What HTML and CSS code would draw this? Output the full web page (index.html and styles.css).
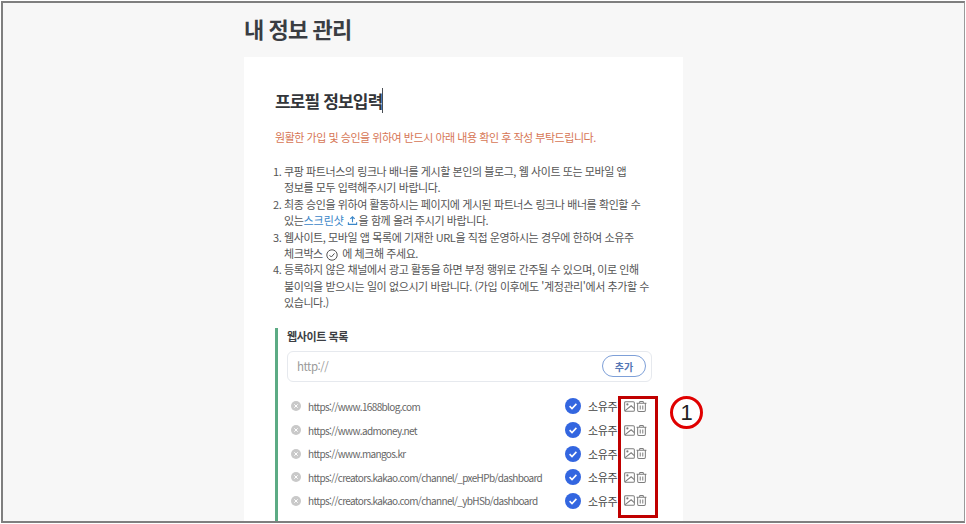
FILE: index.html
```html
<!DOCTYPE html>
<html lang="ko">
<head>
<meta charset="utf-8">
<title>내 정보 관리</title>
<link rel="stylesheet" href="styles.css">
</head>
<body>
<div class="frame">
  <main class="page">
    <h1 class="page-title">내 정보 관리</h1>
    <section class="card">
      <h2 class="card-title"><span class="caret">프로필 정보입력</span></h2>
      <p class="notice">원활한 가입 및 승인을 위하여 반드시 아래 내용 확인 후 작성 부탁드립니다.</p>
      <ol class="rules">
        <li>쿠팡 파트너스의 링크나 배너를 게시할 본인의 블로그, 웹 사이트 또는 모바일 앱<br>정보를 모두 입력해주시기 바랍니다.</li>
        <li>최종 승인을 위하여 활동하시는 페이지에 게시된 파트너스 링크나 배너를 확인할 수<br>있는<span class="link">스크린샷</span> <svg class="ico-up" viewBox="0 0 12 12"><path d="M6 8V2M3.6 4.3 6 1.9l2.4 2.4M1.5 8v2.2h9V8"/></svg><span>을 함께 올려 주시기 바랍니다.</span></li>
        <li>웹사이트, 모바일 앱 목록에 기재한 URL을 직접 운영하시는 경우에 한하여 소유주<br>체크박스 <svg class="ico-check" viewBox="0 0 12 12"><circle cx="6" cy="6" r="5.2"/><path d="M3.5 6.2 5.3 8l3.2-3.6"/></svg> <span>에 체크해 주세요.</span></li>
        <li>등록하지 않은 채널에서 광고 활동을 하면 부정 행위로 간주될 수 있으며, 이로 인해<br>불이익을 받으시는 일이 없으시기 바랍니다. (가입 이후에도 '계정관리'에서 추가할 수<br>있습니다.)</li>
      </ol>
      <div class="sites">
        <h3 class="sites-title">웹사이트 목록</h3>
        <div class="url-input">
          <span class="placeholder">http://</span>
          <button class="add-btn" type="button">추가</button>
        </div>
        <ul class="site-list">
          <li class="site">
            <svg class="ico-remove" viewBox="0 0 10 10"><circle cx="5" cy="5" r="5"/><path d="M3.3 3.3l3.4 3.4M6.7 3.3 3.3 6.7"/></svg>
            <span class="url">https://www.1688blog.com</span>
            <svg class="ico-owner" viewBox="0 0 16 16"><circle cx="8" cy="8" r="8"/><path d="M4.6 8.2 7 10.5l4.4-4.6"/></svg>
            <span class="owner">소유주</span>
            <svg class="ico-img" viewBox="0 0 12 12"><rect x=".7" y=".7" width="10.6" height="10.6" rx="1.2"/><path d="M.9 10.8 7.8 5.2l3.4 3"/><circle class="dot" cx="3.7" cy="3.7" r="1.2"/></svg>
            <svg class="ico-trash" viewBox="0 0 12 12"><path d="M.6 2.5h10.8M4 2.3V1.2q0-.6.6-.6h2.8q.6 0 .6.6v1.1M1.8 2.7v7.5q0 1.2 1.2 1.2h6q1.2 0 1.2-1.2V2.7M4.6 4.8v4.4M7.4 4.8v4.4"/></svg>
          </li>
          <li class="site">
            <svg class="ico-remove" viewBox="0 0 10 10"><circle cx="5" cy="5" r="5"/><path d="M3.3 3.3l3.4 3.4M6.7 3.3 3.3 6.7"/></svg>
            <span class="url">https://www.admoney.net</span>
            <svg class="ico-owner" viewBox="0 0 16 16"><circle cx="8" cy="8" r="8"/><path d="M4.6 8.2 7 10.5l4.4-4.6"/></svg>
            <span class="owner">소유주</span>
            <svg class="ico-img" viewBox="0 0 12 12"><rect x=".7" y=".7" width="10.6" height="10.6" rx="1.2"/><path d="M.9 10.8 7.8 5.2l3.4 3"/><circle class="dot" cx="3.7" cy="3.7" r="1.2"/></svg>
            <svg class="ico-trash" viewBox="0 0 12 12"><path d="M.6 2.5h10.8M4 2.3V1.2q0-.6.6-.6h2.8q.6 0 .6.6v1.1M1.8 2.7v7.5q0 1.2 1.2 1.2h6q1.2 0 1.2-1.2V2.7M4.6 4.8v4.4M7.4 4.8v4.4"/></svg>
          </li>
          <li class="site">
            <svg class="ico-remove" viewBox="0 0 10 10"><circle cx="5" cy="5" r="5"/><path d="M3.3 3.3l3.4 3.4M6.7 3.3 3.3 6.7"/></svg>
            <span class="url">https://www.mangos.kr</span>
            <svg class="ico-owner" viewBox="0 0 16 16"><circle cx="8" cy="8" r="8"/><path d="M4.6 8.2 7 10.5l4.4-4.6"/></svg>
            <span class="owner">소유주</span>
            <svg class="ico-img" viewBox="0 0 12 12"><rect x=".7" y=".7" width="10.6" height="10.6" rx="1.2"/><path d="M.9 10.8 7.8 5.2l3.4 3"/><circle class="dot" cx="3.7" cy="3.7" r="1.2"/></svg>
            <svg class="ico-trash" viewBox="0 0 12 12"><path d="M.6 2.5h10.8M4 2.3V1.2q0-.6.6-.6h2.8q.6 0 .6.6v1.1M1.8 2.7v7.5q0 1.2 1.2 1.2h6q1.2 0 1.2-1.2V2.7M4.6 4.8v4.4M7.4 4.8v4.4"/></svg>
          </li>
          <li class="site">
            <svg class="ico-remove" viewBox="0 0 10 10"><circle cx="5" cy="5" r="5"/><path d="M3.3 3.3l3.4 3.4M6.7 3.3 3.3 6.7"/></svg>
            <span class="url">https://creators.kakao.com/channel/_pxeHPb/dashboard</span>
            <svg class="ico-owner" viewBox="0 0 16 16"><circle cx="8" cy="8" r="8"/><path d="M4.6 8.2 7 10.5l4.4-4.6"/></svg>
            <span class="owner">소유주</span>
            <svg class="ico-img" viewBox="0 0 12 12"><rect x=".7" y=".7" width="10.6" height="10.6" rx="1.2"/><path d="M.9 10.8 7.8 5.2l3.4 3"/><circle class="dot" cx="3.7" cy="3.7" r="1.2"/></svg>
            <svg class="ico-trash" viewBox="0 0 12 12"><path d="M.6 2.5h10.8M4 2.3V1.2q0-.6.6-.6h2.8q.6 0 .6.6v1.1M1.8 2.7v7.5q0 1.2 1.2 1.2h6q1.2 0 1.2-1.2V2.7M4.6 4.8v4.4M7.4 4.8v4.4"/></svg>
          </li>
          <li class="site">
            <svg class="ico-remove" viewBox="0 0 10 10"><circle cx="5" cy="5" r="5"/><path d="M3.3 3.3l3.4 3.4M6.7 3.3 3.3 6.7"/></svg>
            <span class="url">https://creators.kakao.com/channel/_ybHSb/dashboard</span>
            <svg class="ico-owner" viewBox="0 0 16 16"><circle cx="8" cy="8" r="8"/><path d="M4.6 8.2 7 10.5l4.4-4.6"/></svg>
            <span class="owner">소유주</span>
            <svg class="ico-img" viewBox="0 0 12 12"><rect x=".7" y=".7" width="10.6" height="10.6" rx="1.2"/><path d="M.9 10.8 7.8 5.2l3.4 3"/><circle class="dot" cx="3.7" cy="3.7" r="1.2"/></svg>
            <svg class="ico-trash" viewBox="0 0 12 12"><path d="M.6 2.5h10.8M4 2.3V1.2q0-.6.6-.6h2.8q.6 0 .6.6v1.1M1.8 2.7v7.5q0 1.2 1.2 1.2h6q1.2 0 1.2-1.2V2.7M4.6 4.8v4.4M7.4 4.8v4.4"/></svg>
          </li>
        </ul>
      </div>
    </section>
  </main>
  <div class="mark-box"></div>
  <div class="mark-num">1</div>
</div>
</body>
</html>
```
FILE: styles.css
```css
* { box-sizing: border-box; }
html, body { margin: 0; padding: 0; height: 524px; overflow: hidden; background: #fff; }
body { font-family: "Noto Sans CJK KR", "Noto Sans", sans-serif; color: #555; }

.frame {
  position: relative;
  width: 964px;
  height: 522px;
  margin: 1px 0 0 1px;
  border-top: 2px solid #7f7f7f;
  border-left: 2px solid #7f7f7f;
  border-right: 1px solid #9a9a9a;
  border-bottom: 2px solid #7f7f7f;
  background: #f7f7f7;
  overflow: hidden;
}

.page { width: 439px; margin-left: 241px; }

.page-title {
  margin: 0;
  height: 54px;
  padding-top: 7px;
  font-size: 22px;
  line-height: 36px;
  font-weight: 700;
  color: #3a3d42;
  letter-spacing: -0.9px;
}

.card { background: #fff; height: 520px; padding: 31px 31px 0 31px; }

.card-title { margin: 0; font-size: 17px; line-height: 26px; font-weight: 700; color: #33363a; letter-spacing: -0.85px; }
.caret { border-right: 1px solid #4a4f55; }

.notice { margin: 14px 0 0; font-size: 11px; line-height: 18px; color: #d67655; letter-spacing: -0.47px; }

.rules {
  margin: 17px 0 0;
  padding: 0 0 0 9px;
  font-size: 11px;
  line-height: 16.4px;
  color: #555;
  letter-spacing: -0.42px;
  white-space: nowrap;
}
.link { color: #3a86c8; letter-spacing: 0; }
.ico-up { width: 11px; height: 11px; margin-right: 1px; vertical-align: -1px; fill: none; stroke: #3a86c8; stroke-width: 1.2; }
.ico-check { width: 12px; height: 12px; margin: 0 1px; vertical-align: -2.5px; fill: none; stroke: #555; stroke-width: 1; }

.sites { margin-top: 17px; border-left: 3px solid #5cab84; padding: 0 0 20px 9px; }
.sites-title { margin: 0; font-size: 11px; line-height: 17px; font-weight: 700; color: #3c3f44; letter-spacing: -0.4px; }

.url-input {
  display: flex;
  align-items: center;
  justify-content: space-between;
  height: 31px;
  margin-top: 6px;
  padding: 0 5px 0 9px;
  background: #fff;
  border: 1px solid #e6e9ee;
  border-radius: 6px;
}
.placeholder { font-size: 11.5px; color: #9a9a9a; letter-spacing: -0.5px; }
.add-btn {
  width: 44px;
  height: 22px;
  padding: 0;
  background: #fff;
  border: 1px solid #7ea0d8;
  border-radius: 11px;
  font-family: inherit;
  font-size: 10px;
  font-weight: 700;
  color: #5577b5;
}

.site-list { list-style: none; margin: 13px 0 0; padding: 0; }
.site { display: flex; align-items: center; height: 23.6px; }
.ico-remove { width: 10px; height: 10px; margin-left: 4px; fill: #c9c9c9; stroke: #fff; flex: none; }
.ico-remove circle { stroke: none; }
.url { margin-left: 7px; flex: 1; min-width: 0; font-size: 10px; color: #666; white-space: nowrap; letter-spacing: -0.65px; }
.ico-owner { width: 16px; height: 16px; flex: none; fill: #3366e0; stroke: none; margin-right: 7px; }
.ico-owner path { fill: none; stroke: #fff; stroke-width: 1.6; }
.owner { font-size: 11px; color: #444; width: 35.5px; flex: none; white-space: nowrap; letter-spacing: -0.4px; }
.ico-img, .ico-trash { width: 11px; height: 11px; flex: none; fill: none; stroke: #7d7d7d; stroke-width: 1.1; }
.ico-img { margin-right: 1.5px; }
.ico-img .dot { fill: #7d7d7d; stroke: none; }
.ico-trash { margin-right: 5px; }

.mark-box {
  position: absolute;
  left: 615px;
  top: 393px;
  width: 40px;
  height: 122px;
  border: 3px solid #c00000;
}
.mark-num {
  position: absolute;
  left: 667px;
  top: 393px;
  width: 33px;
  height: 33px;
  border: 3px solid #e00000;
  border-radius: 50%;
  background: #fff;
  color: #222;
  font-family: "Liberation Sans", sans-serif;
  font-size: 22px;
  line-height: 27px;
  text-align: center;
}
```
